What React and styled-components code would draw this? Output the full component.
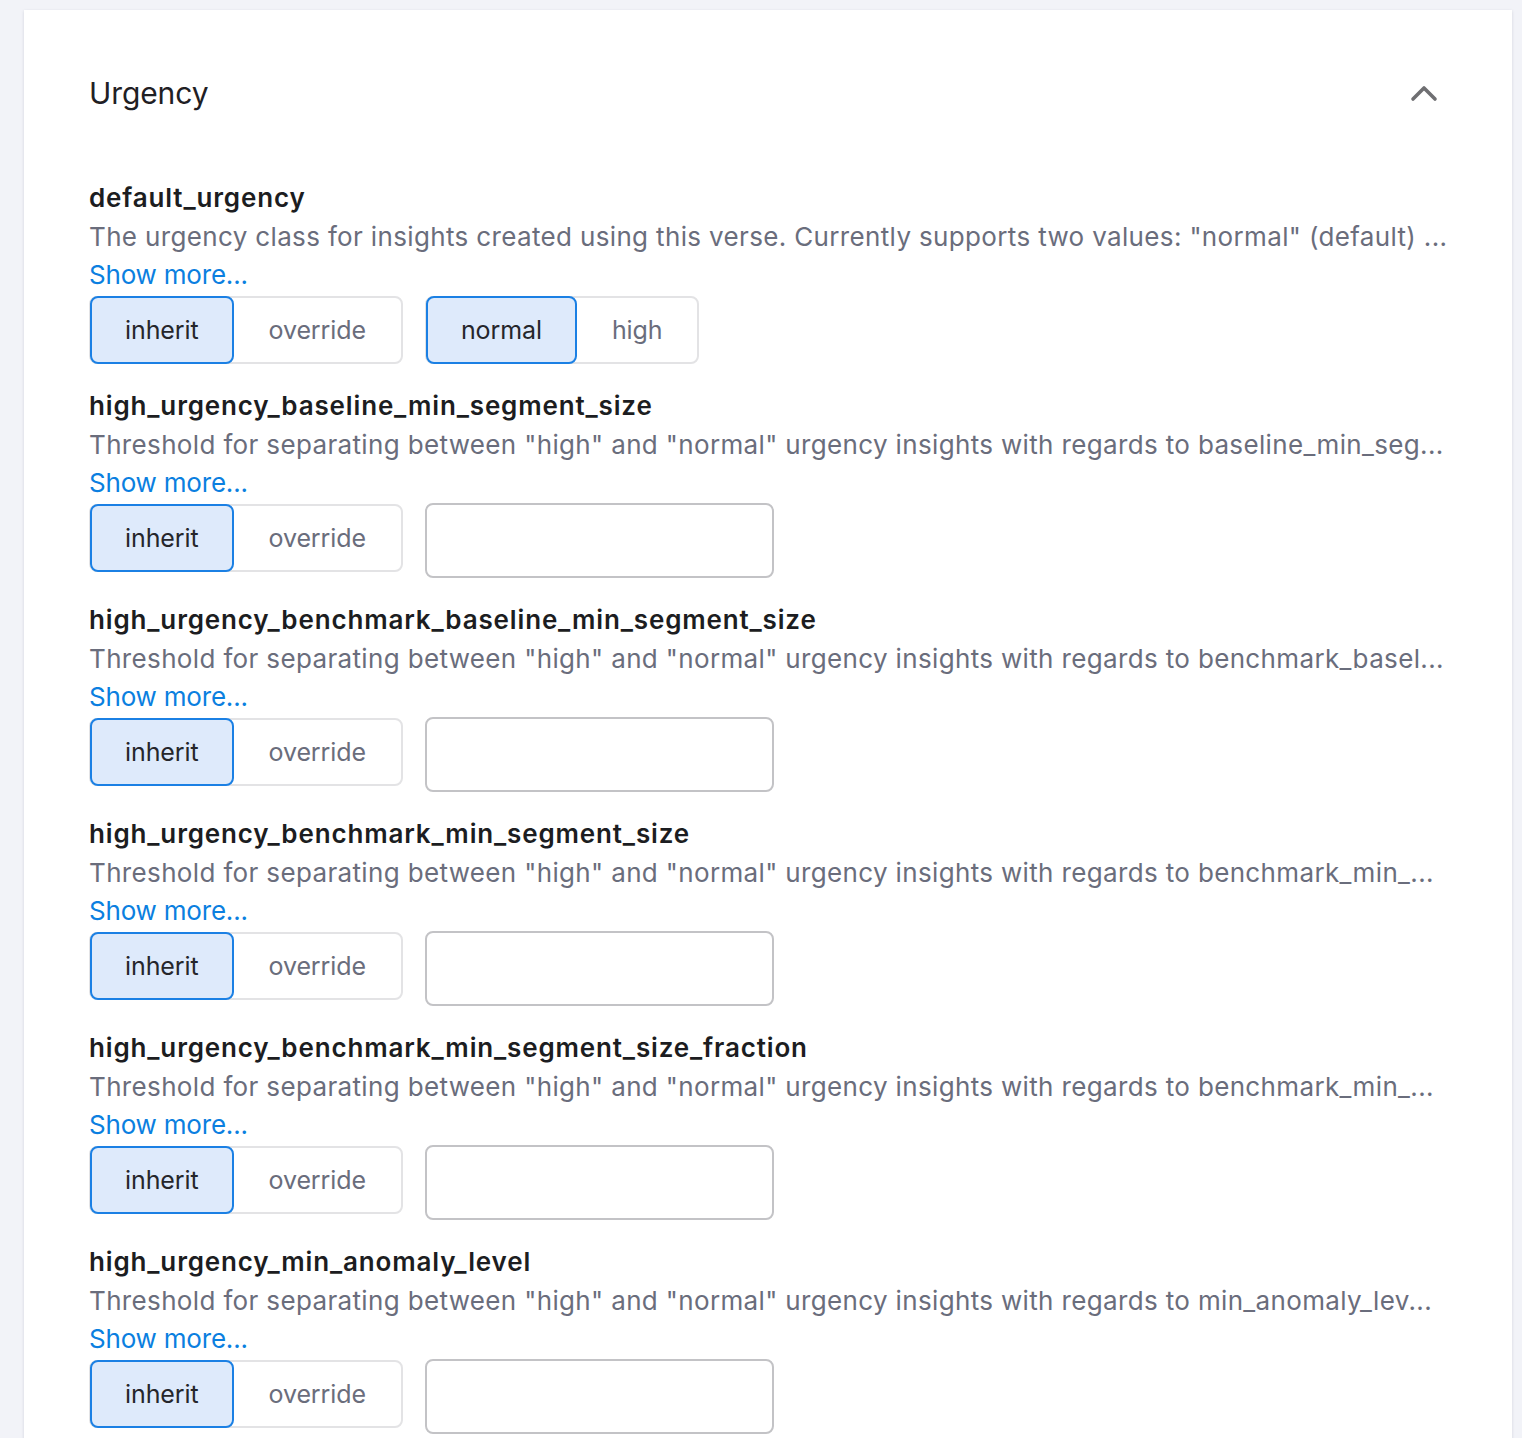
import React from "react";
import styled, { createGlobalStyle } from "styled-components";

const GlobalStyle = createGlobalStyle`
  body {
    margin: 0;
    background: #f2f3f8;
    font-family: "Inter", "Noto Sans", sans-serif;
  }
`;

const Page = styled.div`
  padding: 10px 10px 0 24px;
`;

const Card = styled.section`
  background: #fff;
  box-shadow: 0 1px 3px rgba(30, 35, 60, 0.14);
  padding: 63px 64px 40px 65px;
`;

const Header = styled.div`
  display: flex;
  align-items: center;
  justify-content: space-between;
  height: 40px;
  margin-bottom: 65px;
`;

const Title = styled.h2`
  margin: 0;
  font-size: 30px;
  font-weight: 400;
  color: #1f2024;
  letter-spacing: -0.1px;
`;

const Chevron = styled.button`
  display: flex;
  align-items: center;
  justify-content: center;
  width: 48px;
  height: 40px;
  border: none;
  background: none;
  padding: 0;
  cursor: pointer;
`;

const List = styled.div`
  display: flex;
  flex-direction: column;
  gap: 22px;
`;

const Field = styled.div`
  display: flex;
  flex-direction: column;
`;

const Name = styled.div`
  font-size: 26px;
  font-weight: 600;
  line-height: 40px;
  color: #1c1d21;
  letter-spacing: 0.85px;
`;

const Description = styled.div`
  font-size: 26px;
  line-height: 38px;
  color: #6a6d7c;
  white-space: nowrap;
  letter-spacing: 0.35px;
`;

const ShowMore = styled.a`
  font-size: 26px;
  line-height: 38px;
  color: #0b7fe0;
  cursor: pointer;
  align-self: flex-start;
  letter-spacing: -0.2px;
`;

const Controls = styled.div`
  display: flex;
  align-items: flex-start;
  gap: 22px;
  margin-top: 2px;
`;

const Segment = styled.div`
  display: flex;
  border: 2px solid #e3e3e5;
  border-radius: 8px;
  height: 64px;
`;

const Option = styled.button`
  font-family: inherit;
  font-size: 25px;
  letter-spacing: -0.1px;
  padding: 0 33px;
  height: 68px;
  margin: -2px 0;
  border-radius: 8px;
  cursor: pointer;
  border: 2px solid ${(p) => (p.$active ? "#1b80e4" : "transparent")};
  background: ${(p) => (p.$active ? "#deeafb" : "transparent")};
  color: ${(p) => (p.$active ? "#25262b" : "#6a6d7c")};
  &:first-child {
    margin-left: -1px;
  }
`;

const Input = styled.input`
  box-sizing: border-box;
  width: 349px;
  height: 75px;
  border: 2px solid #c3c3c6;
  border-radius: 8px;
  margin-top: -1px;
  font-size: 25px;
  padding: 0 16px;
`;

// descriptions are shown clipped to one line, as in the collapsed view
const fields = [
  {
    name: "default_urgency",
    desc: 'The urgency class for insights created using this verse. Currently supports two values: "normal" (default) ...',
    choices: ["normal", "high"],
  },
  {
    name: "high_urgency_baseline_min_segment_size",
    desc: 'Threshold for separating between "high" and "normal" urgency insights with regards to baseline_min_seg...',
  },
  {
    name: "high_urgency_benchmark_baseline_min_segment_size",
    desc: 'Threshold for separating between "high" and "normal" urgency insights with regards to benchmark_basel...',
  },
  {
    name: "high_urgency_benchmark_min_segment_size",
    desc: 'Threshold for separating between "high" and "normal" urgency insights with regards to benchmark_min_...',
  },
  {
    name: "high_urgency_benchmark_min_segment_size_fraction",
    desc: 'Threshold for separating between "high" and "normal" urgency insights with regards to benchmark_min_...',
  },
  {
    name: "high_urgency_min_anomaly_level",
    desc: 'Threshold for separating between "high" and "normal" urgency insights with regards to min_anomaly_lev...',
  },
];

const ChevronUp = () => (
  <svg width="28" height="18" viewBox="0 0 28 18" fill="none">
    <path
      d="M3 15 L14 4 L25 15"
      stroke="#6f6f72"
      strokeWidth="3.6"
      strokeLinecap="round"
      strokeLinejoin="round"
    />
  </svg>
);

const App = () => (
  <Page>
    <GlobalStyle />
    <Card>
      <Header>
        <Title>Urgency</Title>
        <Chevron aria-label="Collapse">
          <ChevronUp />
        </Chevron>
      </Header>
      <List>
        {fields.map((f) => (
          <Field key={f.name}>
            <Name>{f.name}</Name>
            <Description>{f.desc}</Description>
            <ShowMore>Show more...</ShowMore>
            <Controls>
              <Segment>
                <Option $active>inherit</Option>
                <Option>override</Option>
              </Segment>
              {f.choices ? (
                <Segment>
                  <Option $active>{f.choices[0]}</Option>
                  <Option>{f.choices[1]}</Option>
                </Segment>
              ) : (
                <Input type="text" />
              )}
            </Controls>
          </Field>
        ))}
      </List>
    </Card>
  </Page>
);

export default App;
